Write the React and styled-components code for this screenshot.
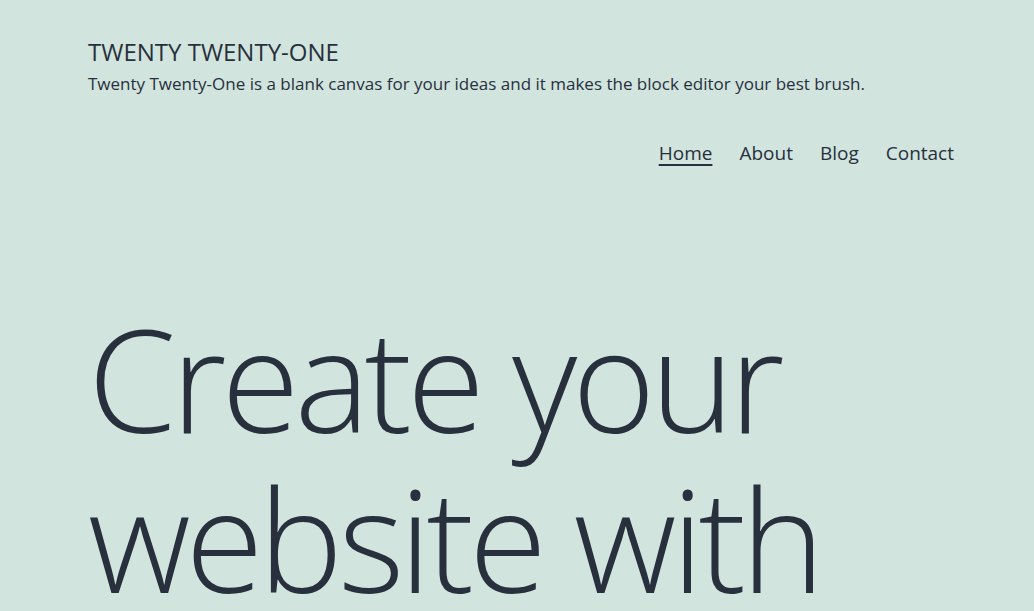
import styled, { createGlobalStyle } from "styled-components";

const GlobalStyle = createGlobalStyle`
  html, body {
    margin: 0;
    padding: 0;
    background: #d1e4dd;
  }
  body {
    font-family: "Open Sans", "Noto Sans", sans-serif;
    color: #28303d;
    overflow: hidden;
  }
`;

const Page = styled.div`
  height: 611px;
  overflow: hidden;
  padding: 0 80px 0 88px;
  box-sizing: border-box;
`;

const Header = styled.header`
  padding-top: 36px;
`;

const SiteTitle = styled.h1`
  margin: 0;
  font-size: 24px;
  font-weight: 400;
  line-height: 1.3;
  text-transform: uppercase;
`;

const Description = styled.p`
  margin: 5px 0 0;
  font-size: 17px;
  line-height: 1.4;
`;

const Nav = styled.nav`
  display: flex;
  justify-content: flex-end;
  gap: 27px;
  margin-top: 45px;
`;

const NavLink = styled.a`
  font-size: 19px;
  line-height: 1.3;
  color: #28303d;
  text-decoration: ${({ $active }) => ($active ? "underline" : "none")};
  text-decoration-thickness: 2px;
  text-underline-offset: 4px;
  cursor: pointer;
`;

const Hero = styled.h2`
  margin: 132px 0 0;
  font-size: 142px;
  font-weight: 300;
  line-height: 160px;
  letter-spacing: -5px;
`;

const LINKS = ["Home", "About", "Blog", "Contact"];

export default function App() {
  return (
    <Page>
      <GlobalStyle />
      <Header>
        <SiteTitle>Twenty Twenty-One</SiteTitle>
        <Description>
          Twenty Twenty-One is a blank canvas for your ideas and it makes the
          block editor your best brush.
        </Description>
        <Nav>
          {LINKS.map((link) => (
            <NavLink key={link} $active={link === "Home"}>
              {link}
            </NavLink>
          ))}
        </Nav>
      </Header>
      <Hero>
        Create your
        <br />
        website with
      </Hero>
    </Page>
  );
}
